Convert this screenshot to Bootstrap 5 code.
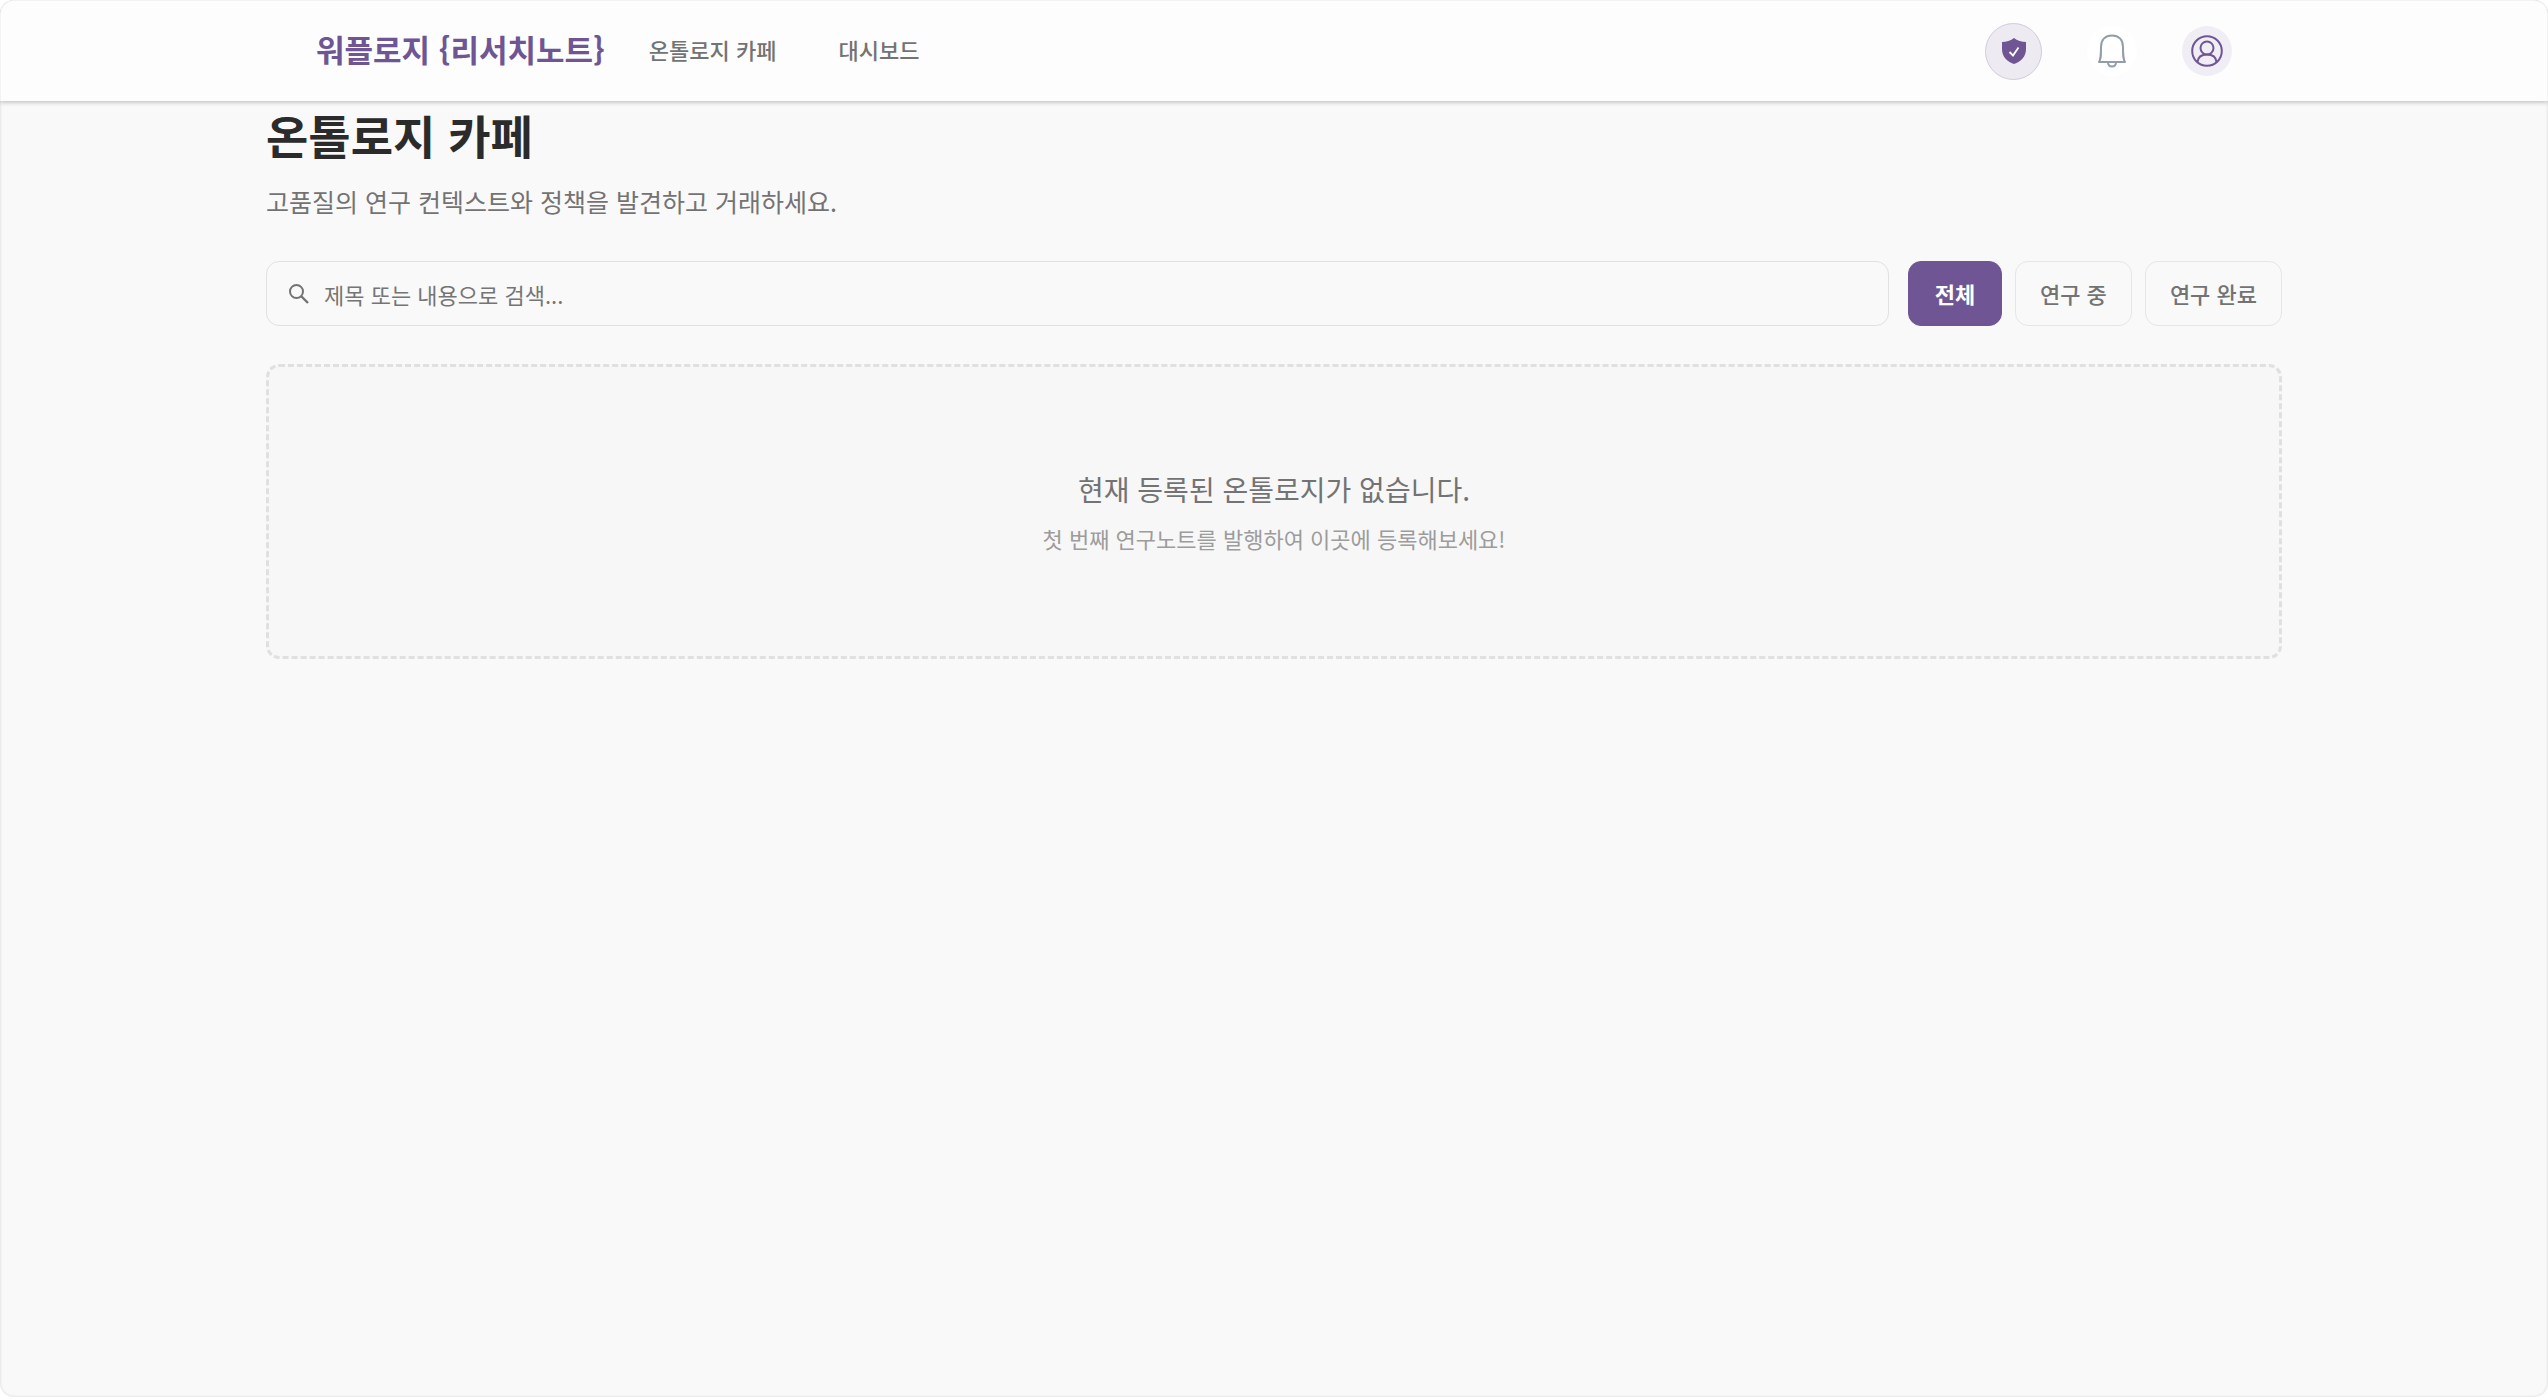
<!DOCTYPE html>
<html lang="ko">
<head>
<meta charset="utf-8">
<meta name="viewport" content="width=device-width, initial-scale=1">
<title>온톨로지 카페</title>
<link rel="stylesheet" href="https://cdn.jsdelivr.net/npm/bootstrap@5.3.0/dist/css/bootstrap.min.css">
<style>
:root{--brand:#6f5594;--ink:#2b2b2b;--muted:#737373;--line:#e1e1e1}
body{font-family:"Noto Sans CJK KR",sans-serif;font-size:22px;line-height:32px;background:#fff;color:var(--muted)}
.app-frame{background:#f9f9f9;border-radius:14px;box-shadow:inset 0 0 2px 1px #e6e6e6;overflow:hidden}
.wide-wrap{max-width:2016px;width:100%}
.top-bar{height:101px;background:#fdfdfd;box-shadow:0 1px 5px rgba(0,0,0,.28);border:1px solid #f3f3f3;border-bottom:0;border-radius:14px 14px 0 0}
.bar-inner{padding:0 50px}
.brand-link{font-size:31px;line-height:48px;font-weight:700;color:var(--brand)}
.menu-link{color:var(--muted);font-weight:500}
.menu{gap:62px;margin-left:44px}
.tools{gap:45px}
.round-btn{width:50px;height:50px;background:#fff}
.round-btn.shield{width:57px;height:57px;background:#edeaf1;border:1px solid #d3cadf}
.round-btn.person{background:#f0edf4}
.page-title{font-size:46px;line-height:66px;font-weight:700;color:var(--ink)}
.page-sub{font-size:25px;line-height:36px;margin-bottom:42px}
.search-row{gap:19px;margin-bottom:38px}
.search-box{height:65px;border:1px solid var(--line);border-radius:13px;padding:0 21px;gap:14px}
.search-box input{color:var(--muted);outline:0}
.search-box input::placeholder{color:#757575;opacity:1}
.filters{gap:13px}
.filter-btn{height:65px;min-width:94px;border:1px solid #e6e6e6;border-radius:13px;padding:0 24px;font-size:22px;font-weight:500;color:var(--muted)}
.filter-btn.active{background:var(--brand);border-color:var(--brand);color:#fff;font-weight:700}
.empty-box{border:3px dashed #e0e0e0;border-radius:13px;background:#f7f7f7;padding:100px 24px}
.empty-title{font-size:28px;line-height:44px;margin-bottom:10px}
.empty-sub{line-height:35px;color:#9c9c9c}
</style>
<script src="https://cdn.jsdelivr.net/npm/bootstrap@5.3.0/dist/js/bootstrap.bundle.min.js"></script>
</head>
<body>
<div class="app-frame min-vh-100">
  <header class="top-bar d-flex">
    <div class="wide-wrap bar-inner mx-auto d-flex align-items-center">
      <a class="brand-link text-decoration-none pb-1" href="#">워플로지 {리서치노트}</a>
      <nav class="menu d-flex pb-1">
        <a class="menu-link text-decoration-none" href="#">온톨로지 카페</a>
        <a class="menu-link text-decoration-none" href="#">대시보드</a>
      </nav>
      <div class="tools d-flex align-items-center ms-auto">
        <button type="button" class="round-btn shield rounded-circle p-0 d-flex align-items-center justify-content-center" aria-label="보안">
          <svg width="26" height="28" viewBox="0 0 26 28"><path d="M13 1C10 3.500 5 5 1 5V12C1 19.500 6 25 13 27C20 25 25 19.500 25 12V5C21 5 16 3.500 13 1Z" fill="#6f5594"/><path d="M8.500 15L12 18.500L17.500 10.500" fill="none" stroke="#fff" stroke-width="1.800"/></svg>
        </button>
        <button type="button" class="round-btn rounded-circle border-0 p-0 d-flex align-items-center justify-content-center" aria-label="알림">
          <svg width="30" height="34" viewBox="0 0 30 34" fill="none" stroke="#939da9" stroke-width="2" stroke-linejoin="round"><path d="M2 28C4 25 4 22 4 13C4 6 8 1.500 15 1.500S26 6 26 13C26 22 26 25 28 28Z"/><path d="M11 28C11 31 12.500 32.500 15 32.500S19 31 19 28"/></svg>
        </button>
        <button type="button" class="round-btn person rounded-circle border-0 p-0 d-flex align-items-center justify-content-center" aria-label="내 계정">
          <svg width="32" height="32" viewBox="0 0 32 32" fill="none" stroke="#6f5594" stroke-width="2"><circle cx="16" cy="16" r="14.800"/><circle cx="16" cy="13" r="6.500"/><path d="M6.500 27C7 22 11 19.500 16 19.500S25 22 25.500 27"/></svg>
        </button>
      </div>
    </div>
  </header>
  <main class="wide-wrap mx-auto">
    <h1 class="page-title mb-3">온톨로지 카페</h1>
    <p class="page-sub">고품질의 연구 컨텍스트와 정책을 발견하고 거래하세요.</p>
    <div class="search-row d-flex">
      <label class="search-box d-flex align-items-center flex-grow-1">
        <svg width="22" height="22" viewBox="0 0 22 22" fill="none" stroke="#737373" stroke-width="2"><circle cx="8.500" cy="8.500" r="6.500"/><path d="M13 13L20 20" stroke-width="2.400"/></svg>
        <input type="text" class="border-0 bg-transparent p-0 flex-grow-1" placeholder="제목 또는 내용으로 검색..." aria-label="검색">
      </label>
      <div class="filters d-flex">
        <button type="button" class="btn filter-btn active">전체</button>
        <button type="button" class="btn filter-btn">연구 중</button>
        <button type="button" class="btn filter-btn">연구 완료</button>
      </div>
    </div>
    <section class="empty-box text-center">
      <p class="empty-title">현재 등록된 온톨로지가 없습니다.</p>
      <p class="empty-sub mb-0">첫 번째 연구노트를 발행하여 이곳에 등록해보세요!</p>
    </section>
  </main>
</div>
</body>
</html>
